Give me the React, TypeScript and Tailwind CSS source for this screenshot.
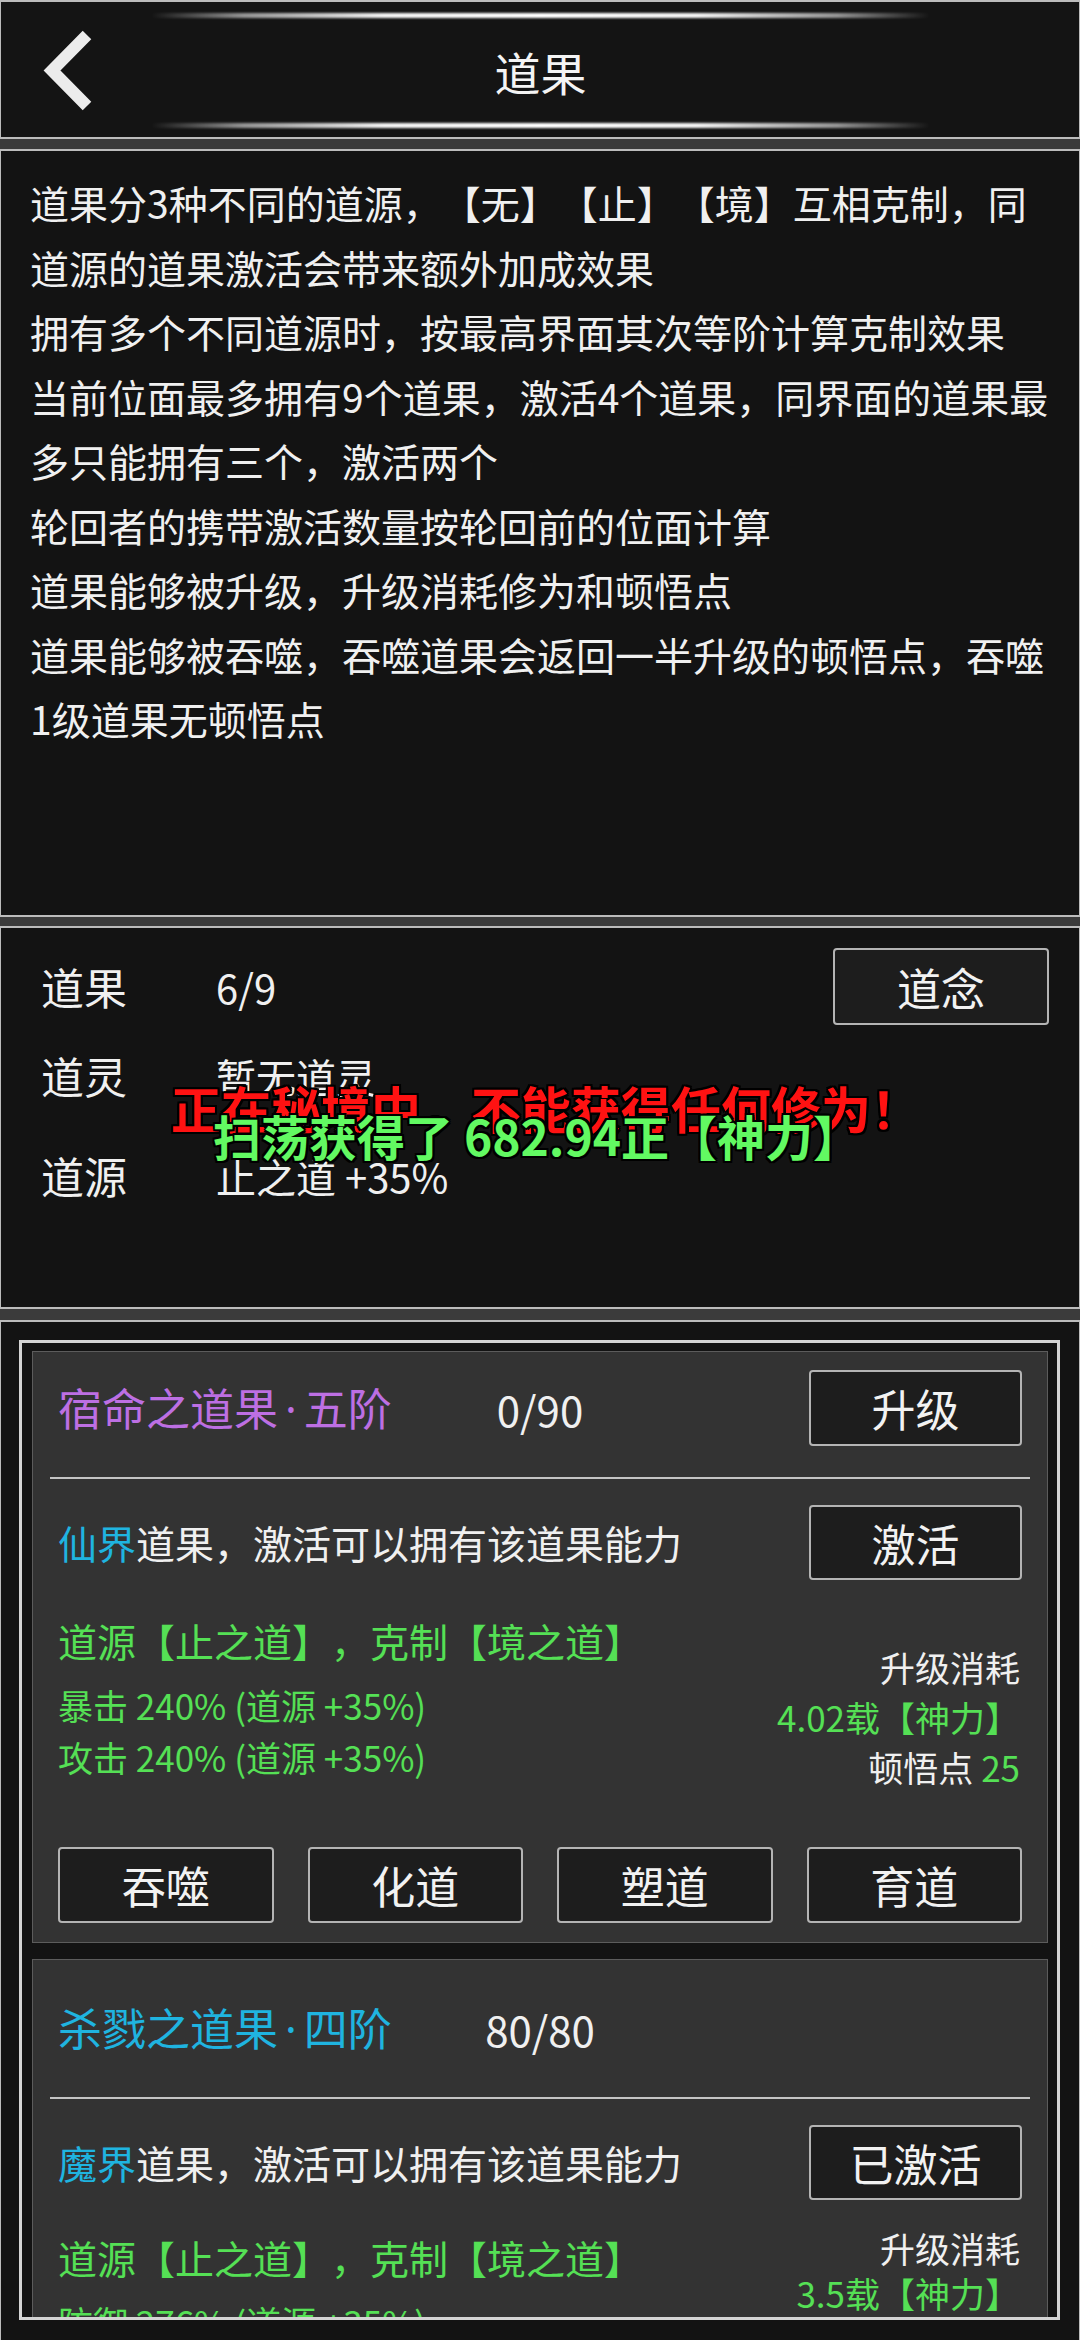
import React from "react";

const GREEN = "text-[#55e055]";

function Btn({ children, className = "" }: { children: React.ReactNode; className?: string }) {
  return (
    <div
      className={`flex items-center justify-center bg-[#1d1d1d] border-2 border-[#b4b4b4] rounded-[4px] text-[44px] leading-none text-[#f2f2f2] ${className}`}
    >
      {children}
    </div>
  );
}

function Glow() {
  return (
    <div className="h-[5px] w-full rounded-full blur-[1px] bg-[linear-gradient(to_right,transparent,rgba(255,255,255,0.55)_12%,rgba(255,255,255,0.95)_30%,#ffffff_50%,rgba(255,255,255,0.95)_70%,rgba(255,255,255,0.55)_88%,transparent)]" />
  );
}

function Dot() {
  return <span className="font-['Noto_Sans',sans-serif] px-[7px]">·</span>;
}

const infoLines = [
  "道果分3种不同的道源，【无】【止】【境】互相克制，同",
  "道源的道果激活会带来额外加成效果",
  "拥有多个不同道源时，按最高界面其次等阶计算克制效果",
  "当前位面最多拥有9个道果，激活4个道果，同界面的道果最",
  "多只能拥有三个，激活两个",
  "轮回者的携带激活数量按轮回前的位面计算",
  "道果能够被升级，升级消耗修为和顿悟点",
  "道果能够被吞噬，吞噬道果会返回一半升级的顿悟点，吞噬",
  "1级道果无顿悟点",
];

export default function App() {
  return (
    <div className="w-[1080px] h-[2340px] overflow-hidden bg-[#3b3b3b] flex flex-col font-['Noto_Sans_CJK_SC','Noto_Sans',sans-serif] text-[#f0f0f0] [text-spacing-trim:space-all]">
      {/* Header */}
      <div className="h-[139px] shrink-0 bg-[#141414] border-y-2 border-x border-[#bcbcbc] flex">
        <div className="w-[150px] shrink-0">
          <svg width="150" height="135" viewBox="0 0 150 135">
            <polyline
              points="86,33 51,68.5 86,104"
              fill="none"
              stroke="#ececec"
              strokeWidth="12"
              strokeLinejoin="miter"
              strokeLinecap="butt"
            />
          </svg>
        </div>
        <div className="flex-1 flex flex-col items-center pt-[11px]">
          <Glow />
          <div className="mt-[25px] h-[56px] text-[46px] leading-[56px] text-[#f4f4f4]">道果</div>
          <div className="mt-[24px] w-full">
            <Glow />
          </div>
        </div>
        <div className="w-[149px] shrink-0" />
      </div>

      {/* Info panel */}
      <div className="mt-[10px] h-[768px] shrink-0 bg-[#131313] border-y-2 border-x border-[#bcbcbc] pt-[19px] pl-[29px] text-[39px] leading-[64.5px] whitespace-nowrap">
        {infoLines.map((l) => (
          <div key={l}>{l}</div>
        ))}
      </div>

      {/* Stats panel */}
      <div className="relative mt-[9px] h-[383px] shrink-0 bg-[#131313] border-y-2 border-x border-[#bcbcbc] pt-[20px] pl-[40px] pr-[30px]">
        <div className="h-[77px] flex items-center">
          <div className="w-[175px] text-[43px]">道果</div>
          <div className="flex-1 text-[40px]">6/9</div>
          <Btn className="w-[216px] h-[77px]">道念</Btn>
        </div>
        <div className="mt-[12px] h-[77px] flex items-center">
          <div className="w-[175px] text-[43px]">道灵</div>
          <div className="flex-1 text-[40px]">暂无道灵</div>
        </div>
        <div className="mt-[23px] h-[77px] flex items-center">
          <div className="w-[175px] text-[43px]">道源</div>
          <div className="flex-1 text-[40px]">止之道 +35%</div>
        </div>

        <div className="absolute left-[170px] top-[148px] h-[62px] leading-[62px] text-[50px] font-bold text-[#ff1212] whitespace-nowrap [text-shadow:2px_2px_0_#000,-2px_-2px_0_#000,2px_-2px_0_#000,-2px_2px_0_#000,0_2px_0_#000,0_-2px_0_#000,2px_0_0_#000,-2px_0_0_#000]">
          正在秘境中，不能获得任何修为！
        </div>
        <div className="absolute left-[212px] top-[177px] h-[60px] leading-[60px] text-[48px] font-bold text-[#62f962] whitespace-nowrap [text-shadow:2px_2px_0_#000,-2px_-2px_0_#000,2px_-2px_0_#000,-2px_2px_0_#000,0_2px_0_#000,0_-2px_0_#000,2px_0_0_#000,-2px_0_0_#000]">
          扫荡获得了 682.94正【神力】
        </div>
      </div>

      {/* List panel */}
      <div className="mt-[11px] h-[1030px] shrink-0 bg-[#131313] border-t-2 border-x border-[#bcbcbc] pt-[18px] pl-[18px] pr-[19px]">
        <div className="h-[980px] border-[3px] border-[#d4d4d4] overflow-hidden pt-[8px] pl-[10px] pr-[9px]">
          {/* Card 1 */}
          <div className="bg-[#333333] border border-[#5c5c5c] pb-[19px]">
            <div className="mt-[18px] mx-[25px] h-[76px] grid grid-cols-[1fr_auto_1fr] items-center">
              <div className="text-[44px] text-[#bd6fe3] whitespace-nowrap">
                宿命之道果
                <Dot />
                五阶
              </div>
              <div className="text-[42px]">0/90</div>
              <div className="flex justify-end">
                <Btn className="w-[213px] h-[76px]">升级</Btn>
              </div>
            </div>
            <div className="mt-[31px] mx-[17px] h-[2px] bg-[#c4c4c4]" />
            <div className="mt-[26px] mx-[25px] h-[75px] flex items-center justify-between">
              <div className="text-[39px] whitespace-nowrap">
                <span className="text-[#1fb4e0]">仙界</span>道果，激活可以拥有该道果能力
              </div>
              <Btn className="w-[213px] h-[75px]">激活</Btn>
            </div>
            <div className="flex justify-between pl-[25px] pr-[27px]">
              <div className={`pt-[34px] ${GREEN} whitespace-nowrap`}>
                <div className="h-[52px] leading-[52px] text-[39px]">道源【止之道】，克制【境之道】</div>
                <div className="mt-[13px] h-[52px] leading-[52px] text-[35px]">暴击 240% (道源 +35%)</div>
                <div className="h-[52px] leading-[52px] text-[35px]">攻击 240% (道源 +35%)</div>
              </div>
              <div className="pt-[62px] text-right text-[35px] whitespace-nowrap">
                <div className="h-[50px] leading-[50px]">升级消耗</div>
                <div className={`h-[50px] leading-[50px] ${GREEN}`}>4.02载【神力】</div>
                <div className="h-[50px] leading-[50px]">
                  顿悟点 <span className={GREEN}>25</span>
                </div>
              </div>
            </div>
            <div className="mt-[55px] mx-[25px] grid grid-cols-4 gap-[34px]">
              {["吞噬", "化道", "塑道", "育道"].map((t) => (
                <Btn key={t} className="h-[76px]">
                  {t}
                </Btn>
              ))}
            </div>
          </div>

          {/* Card 2 */}
          <div className="mt-[16px] bg-[#333333] border border-[#5c5c5c] pb-[19px]">
            <div className="mt-[30px] mx-[25px] h-[76px] grid grid-cols-[1fr_auto_1fr] items-center">
              <div className="text-[44px] text-[#1fb4e0] whitespace-nowrap">
                杀戮之道果
                <Dot />
                四阶
              </div>
              <div className="text-[42px]">80/80</div>
              <div />
            </div>
            <div className="mt-[31px] mx-[17px] h-[2px] bg-[#c4c4c4]" />
            <div className="mt-[26px] mx-[25px] h-[75px] flex items-center justify-between">
              <div className="text-[39px] whitespace-nowrap">
                <span className="text-[#1fb4e0]">魔界</span>道果，激活可以拥有该道果能力
              </div>
              <Btn className="w-[213px] h-[75px]">已激活</Btn>
            </div>
            <div className="flex justify-between pl-[25px] pr-[27px]">
              <div className={`pt-[31px] ${GREEN} whitespace-nowrap`}>
                <div className="h-[52px] leading-[52px] text-[39px]">道源【止之道】，克制【境之道】</div>
                <div className="mt-[13px] h-[52px] leading-[52px] text-[35px]">防御 276% (道源 +35%)</div>
              </div>
              <div className="pt-[25px] text-right text-[35px] whitespace-nowrap">
                <div className="h-[45px] leading-[45px]">升级消耗</div>
                <div className={`h-[45px] leading-[45px] ${GREEN}`}>3.5载【神力】</div>
              </div>
            </div>
          </div>
        </div>
      </div>
    </div>
  );
}
